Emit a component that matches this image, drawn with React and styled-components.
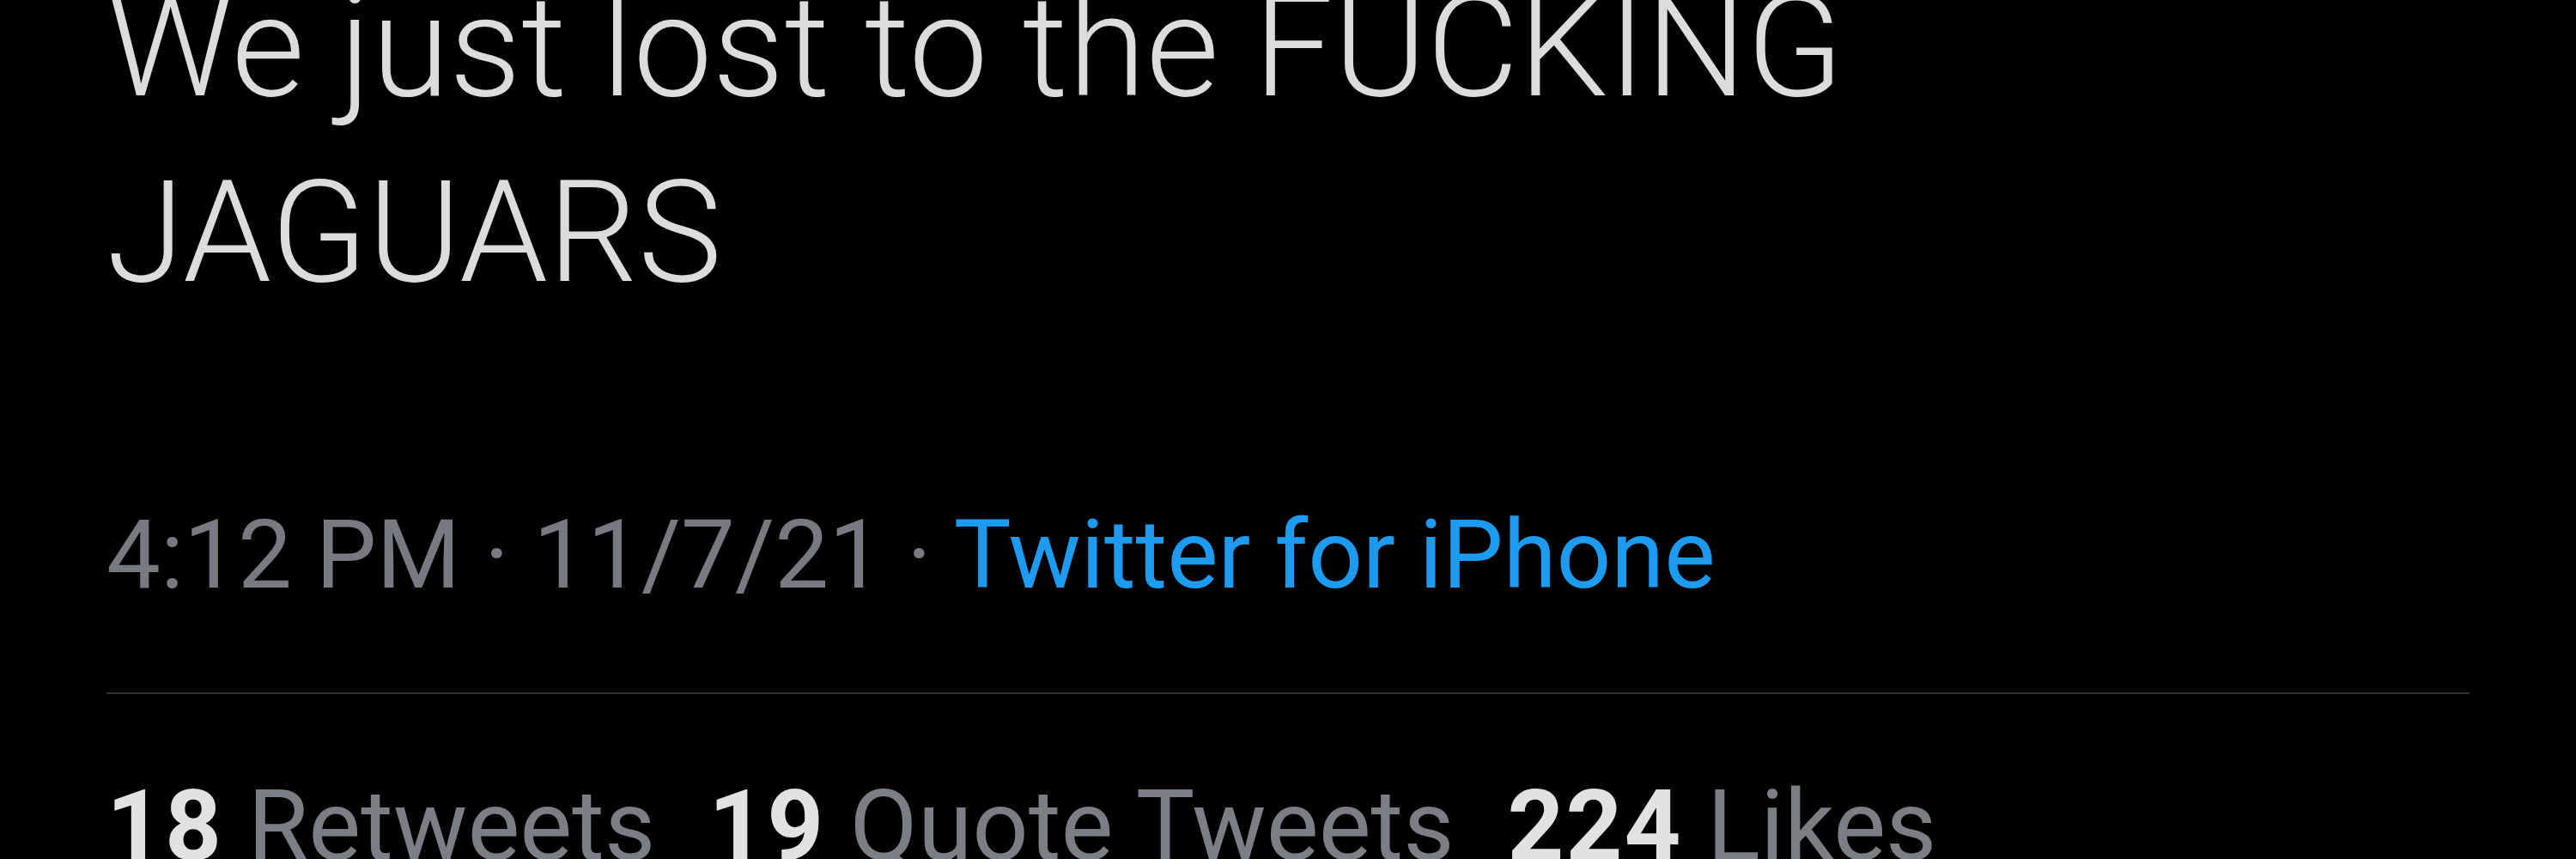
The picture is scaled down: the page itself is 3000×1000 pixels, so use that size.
import React from 'react'
import styled, { createGlobalStyle } from 'styled-components'

const GlobalStyle = createGlobalStyle`
  html, body {
    margin: 0;
    padding: 0;
    background: #000;
  }
  body {
    font-family: Roboto, "Liberation Sans", Arial, sans-serif;
    overflow: hidden;
  }
`

const Page = styled.div`
  width: 3000px;
  height: 1000px;
  background: #000;
  overflow: hidden;
  box-sizing: border-box;
  padding: 0 124px;
`

const Body = styled.p`
  margin: -53px 0 0;
  width: 2200px;
  font-size: 165px;
  line-height: 216px;
  font-weight: 300;
  color: #dcdcdc;
`

const Meta = styled.div`
  margin-top: 197px;
  font-size: 112px;
  line-height: 140px;
  color: #777b81;
  white-space: nowrap;
`

const Source = styled.span`
  color: #1d9bf0;
`

const Divider = styled.hr`
  margin: 90px 0 0;
  border: none;
  height: 2px;
  background: #2f3336;
  width: 2752px;
`

const Stats = styled.div`
  margin-top: 84px;
  display: flex;
  gap: 62px;
  font-size: 115px;
  line-height: 140px;
  white-space: nowrap;
`

const Stat = styled.span`
  color: #7b7f85;
`

const Count = styled.b`
  color: #e2e2e2;
  font-weight: 700;
  letter-spacing: 2px;
`

const stats = [
  { count: '18', label: 'Retweets' },
  { count: '19', label: 'Quote Tweets' },
  { count: '224', label: 'Likes' },
]

export default function App() {
  return (
    <Page>
      <GlobalStyle />
      <Body>We just lost to the FUCKING JAGUARS</Body>
      <Meta>
        4:12 PM · 11/7/21 · <Source>Twitter for iPhone</Source>
      </Meta>
      <Divider />
      <Stats>
        {stats.map(s => (
          <Stat key={s.label}>
            <Count>{s.count}</Count> {s.label}
          </Stat>
        ))}
      </Stats>
    </Page>
  )
}
